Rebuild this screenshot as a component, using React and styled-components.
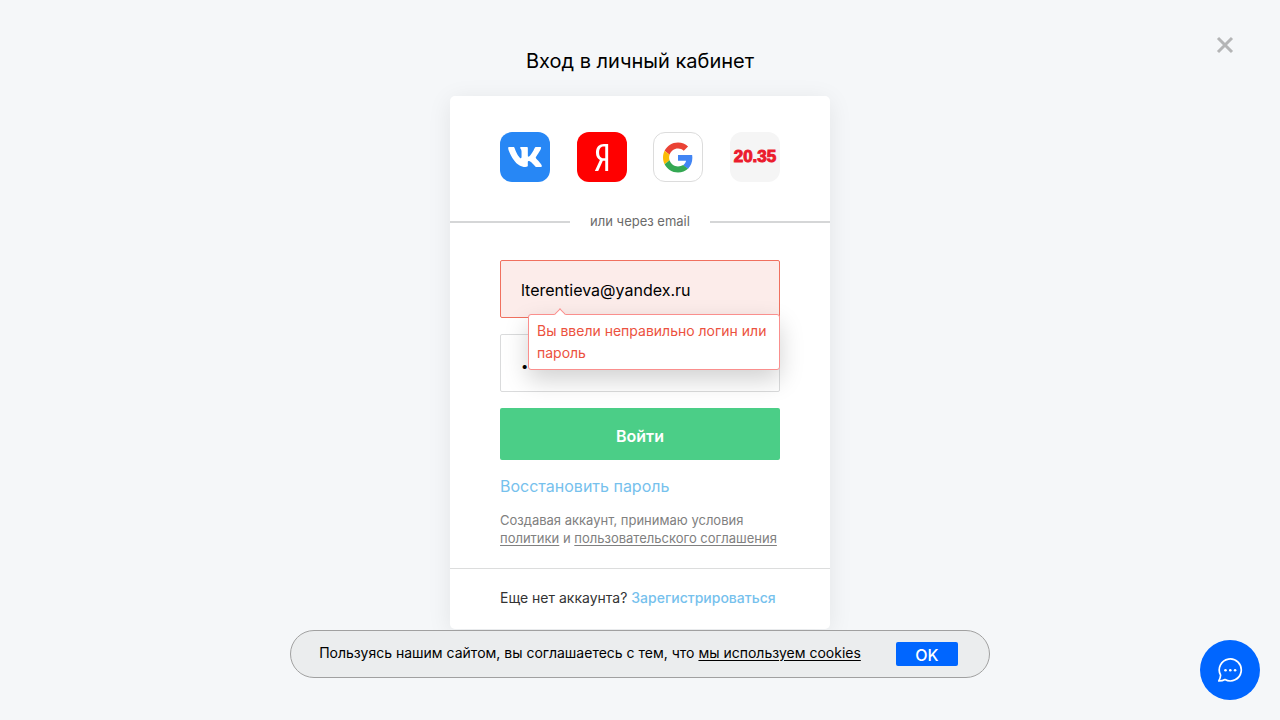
import React from "react";
import styled, { createGlobalStyle } from "styled-components";
import { FaVk, FaYandex } from "react-icons/fa";

const GlobalStyle = createGlobalStyle`
  *, *::before, *::after { box-sizing: border-box; }
  body {
    margin: 0;
    background: #f5f7f9;
    color: #000;
    font-family: Inter, "Noto Sans", sans-serif;
    font-size: 14px;
  }
  button, input { font: inherit; }
`;

const Page = styled.div`
  min-height: 100vh;
  display: flex;
  flex-direction: column;
`;

const Main = styled.main`
  display: flex;
  flex-direction: column;
  align-items: center;
  padding: 48px 16px 91px;
`;

const Title = styled.h1`
  margin: 0 0 22px;
  font-size: 20px;
  font-weight: 400;
  line-height: 26px;
  text-align: center;
`;

const CloseButton = styled.button`
  position: fixed;
  top: 33px;
  right: 43px;
  width: 24px;
  height: 24px;
  padding: 0;
  border: 0;
  background: none;
  cursor: pointer;
`;

const Card = styled.section`
  width: 100%;
  max-width: 380px;
  background: #fff;
  border-radius: 5px;
  box-shadow: 0 4px 24px rgba(0, 0, 0, 0.08);
`;

const Socials = styled.div`
  display: flex;
  justify-content: space-between;
  padding: 36px 50px 28px;
`;

const SocialButton = styled.a`
  display: flex;
  align-items: center;
  justify-content: center;
  width: 50px;
  height: 50px;
  border-radius: 12px;
  border: ${(p) => (p.$outlined ? "1px solid #dcdcdc" : "0")};
  background: ${(p) => p.$bg};
  color: #fff;
  text-decoration: none;
`;

const Brand = styled.span`
  color: #eb1c2d;
  font-family: "Liberation Sans", sans-serif;
  font-size: 17px;
  font-weight: 700;
  -webkit-text-stroke: 1px #eb1c2d;
`;

const Divider = styled.div`
  display: flex;
  align-items: center;
  gap: 16px;
  color: #6b6b6b;
  font-size: 13px;
  line-height: 20px;

  &::before, &::after {
    content: "";
    flex: 1;
    height: 2px;
    background: #d5d6d7;
  }
`;

const DividerText = styled.span`
  width: 108px;
  padding: 1px 0 3px;
  text-align: center;
  white-space: nowrap;
`;

const Form = styled.form`
  display: flex;
  flex-direction: column;
  gap: 16px;
  padding: 26px 50px 20px;
`;

const Field = styled.div`
  position: relative;
`;

const Input = styled.input`
  display: block;
  width: 100%;
  height: 58px;
  padding: 2px 20px 0;
  border: 1px solid ${(p) => (p.$invalid ? "#f0705f" : "#dadbdc")};
  border-radius: 2px;
  background: ${(p) => (p.$invalid ? "#fcecea" : "#fff")};
  color: #000;
  font-size: 16px;
  outline: none;

  &[type="password"] { padding-top: 6px; font-size: 13px; }
`;

const ErrorBubble = styled.div`
  position: absolute;
  z-index: 1;
  top: 54px;
  left: 28px;
  right: 0;
  padding: 5px 8px;
  border: 1px solid #fa8f8d;
  border-radius: 3px;
  background: #fff;
  box-shadow: 0 10px 24px rgba(0, 0, 0, 0.18);
  color: #ec5240;
  font-size: 14px;
  line-height: 22px;

  &::before {
    content: "";
    position: absolute;
    top: -5px;
    left: 27px;
    width: 8px;
    height: 8px;
    border: solid #fa8f8d;
    border-width: 1px 0 0 1px;
    background: #fff;
    transform: rotate(45deg);
  }
`;

const SubmitButton = styled.button`
  height: 52px;
  padding: 4px 0 0;
  border: 0;
  border-radius: 2px;
  background: #4bce87;
  color: #fff;
  font-size: 16px;
  font-weight: 600;
  cursor: pointer;
`;

const AccentLink = styled.a`
  color: #76c1ed;
  font-size: ${(p) => (p.$large ? "16px" : "14px")};
  font-weight: ${(p) => (p.$large ? 400 : 500)};
  line-height: 20px;
  text-decoration: none;
  white-space: nowrap;
`;

const Terms = styled.p`
  margin: -1px 0 1px;
  color: #808080;
  font-size: 13px;
  line-height: 18px;

  a { color: inherit; text-underline-offset: 2px; white-space: nowrap; }
`;

const CardFooter = styled.div`
  padding: 19px 50px 21px;
  border-top: 1px solid #dcdddd;
  color: #333;
  line-height: 20px;
  white-space: nowrap;
`;

const CookieBar = styled.aside`
  position: fixed;
  left: 0;
  right: 0;
  bottom: 42px;
  width: fit-content;
  margin: 0 auto;
  min-height: 48px;
  display: flex;
  align-items: center;
  gap: 35px;
  padding: 0 31px 0 28px;
  border: 1px solid #a0a0a0;
  border-radius: 24px;
  background: #ebedee;
  font-size: 14px;
  line-height: 20px;

  p { margin: 0 0 2px; }
  a { color: inherit; text-underline-offset: 2px; }
`;

const OkButton = styled.button`
  width: 62px;
  height: 24px;
  padding: 1px 0 0;
  border: 0;
  border-radius: 2px;
  background: #06f;
  color: #fff;
  font-size: 16px;
  font-weight: 500;
  line-height: 24px;
  cursor: pointer;
`;

const ChatButton = styled.button`
  position: fixed;
  right: 20px;
  bottom: 20px;
  display: flex;
  align-items: center;
  justify-content: center;
  width: 60px;
  height: 60px;
  padding: 0;
  border: 0;
  border-radius: 50%;
  background: #06f;
  cursor: pointer;
`;

const GoogleLogo = () => (
  <svg width="30" height="31" viewBox="0 0 48 48" aria-hidden="true">
    <path fill="#ea4335" d="M24 9.5c3.54 0 6.71 1.22 9.21 3.6l6.85-6.85C35.9 2.38 30.47 0 24 0 14.62 0 6.51 5.38 2.56 13.22l7.98 6.19C12.43 13.72 17.74 9.5 24 9.5z" />
    <path fill="#4285f4" d="M46.98 24.55c0-1.57-.15-3.09-.38-4.55H24v9.02h12.94c-.58 2.96-2.26 5.48-4.78 7.18l7.73 6c4.51-4.18 7.09-10.36 7.09-17.65z" />
    <path fill="#fbbc05" d="M10.53 28.59c-.48-1.45-.76-2.99-.76-4.59s.27-3.14.76-4.59l-7.98-6.19C.92 16.46 0 20.12 0 24c0 3.88.92 7.54 2.56 10.78l7.97-6.19z" />
    <path fill="#34a853" d="M24 48c6.48 0 11.93-2.13 15.89-5.81l-7.73-6c-2.15 1.45-4.92 2.3-8.16 2.3-6.26 0-11.57-4.22-13.47-9.91l-7.98 6.19C6.51 42.62 14.62 48 24 48z" />
  </svg>
);

const ChatIcon = () => (
  <svg width="26" height="26" viewBox="0 0 26 26" fill="none" aria-hidden="true">
    <path d="M3.6 18.2A11 11 0 1 1 8 22.6C6.3 23.6 4 24 1.8 24C2.8 22.2 3.5 20.2 3.6 18.2Z" stroke="#fff" strokeWidth="1.7" strokeLinejoin="round" />
    <g fill="#fff">
      <circle cx="8.5" cy="13.3" r="1.3" />
      <circle cx="13.3" cy="13.3" r="1.3" />
      <circle cx="18.1" cy="13.3" r="1.3" />
    </g>
  </svg>
);

export default function App() {
  return (
    <Page>
      <GlobalStyle />
      <CloseButton type="button" aria-label="Закрыть">
        <svg width="24" height="24" viewBox="0 0 24 24" aria-hidden="true">
          <path d="M5 5l14 14M19 5L5 19" stroke="#b4b5b6" strokeWidth="3" />
        </svg>
      </CloseButton>
      <Main>
        <Title>Вход в личный кабинет</Title>
        <Card>
          <Socials>
            <SocialButton href="#vk" aria-label="ВКонтакте" $bg="#2787f5">
              <FaVk size={36} />
            </SocialButton>
            <SocialButton href="#yandex" aria-label="Яндекс" $bg="#f00">
              <FaYandex size={27} />
            </SocialButton>
            <SocialButton href="#google" aria-label="Google" $bg="#fff" $outlined>
              <GoogleLogo />
            </SocialButton>
            <SocialButton href="#2035" $bg="#f5f5f5">
              <Brand>20.35</Brand>
            </SocialButton>
          </Socials>
          <Divider>
            <DividerText>или через email</DividerText>
          </Divider>
          <Form onSubmit={(e) => e.preventDefault()}>
            <Field>
              <Input
                type="text"
                aria-label="Email"
                aria-invalid="true"
                aria-describedby="login-error"
                defaultValue="lterentieva@yandex.ru"
                $invalid
              />
              <ErrorBubble id="login-error" role="alert">
                Вы ввели неправильно логин или пароль
              </ErrorBubble>
            </Field>
            <Input type="password" aria-label="Пароль" defaultValue="password" />
            <SubmitButton type="submit">Войти</SubmitButton>
            <AccentLink href="#recover" $large>Восстановить пароль</AccentLink>
            <Terms>
              Создавая аккаунт, принимаю условия <a href="#policy">политики</a> и{" "}
              <a href="#agreement">пользовательского соглашения</a>
            </Terms>
          </Form>
          <CardFooter>
            Еще нет аккаунта? <AccentLink href="#register">Зарегистрироваться</AccentLink>
          </CardFooter>
        </Card>
      </Main>
      <CookieBar>
        <p>
          Пользуясь нашим сайтом, вы соглашаетесь с тем, что <a href="#cookies">мы используем cookies</a>
        </p>
        <OkButton type="button">OK</OkButton>
      </CookieBar>
      <ChatButton type="button" aria-label="Открыть чат">
        <ChatIcon />
      </ChatButton>
    </Page>
  );
}
